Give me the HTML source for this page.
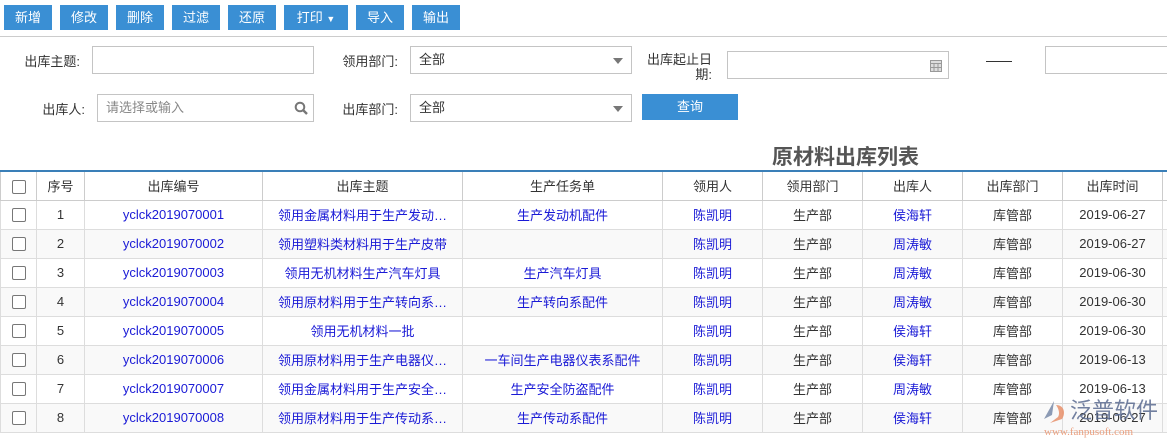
<!DOCTYPE html>
<html><head><meta charset="utf-8"><style>
*{box-sizing:border-box;margin:0;padding:0}
body{width:1167px;height:442px;overflow:hidden;background:#fff;font-family:"Liberation Sans","Noto Sans CJK SC",sans-serif;font-size:13px;color:#333;position:relative}
.btn{position:absolute;top:5px;height:25px;background:#3a8fd4;color:#fff;text-align:center;line-height:25px;font-size:13px}
.hr{position:absolute;top:36px;left:0;width:1167px;height:1px;background:#ccc}
.lbl{position:absolute;font-size:13px;color:#333;text-align:right}
.inp{position:absolute;border:1px solid #c4c4c4;height:28px;background:#fff;font-size:13px;line-height:26px;padding-left:8px}
.tri{position:absolute;right:8px;top:11px;width:0;height:0;border-left:5px solid transparent;border-right:5px solid transparent;border-top:6px solid #777}
table{position:absolute;left:0;top:170px;border-collapse:collapse;border-top:2px solid #3a7fb8;table-layout:fixed;width:1167px}
td,th{height:29px;border:1px solid #ddd;text-align:center;font-weight:normal;font-size:13px;white-space:nowrap;overflow:hidden}
th{border-color:#ccc;border-bottom:1px solid #ccc}
tr:nth-child(odd) td{background:#f9f9f9}
.a{color:#1a1ad6}
.cb{display:inline-block;width:14px;height:14px;border:1px solid #777;border-radius:2px;vertical-align:middle;background:#fff}
</style></head><body>
<div class="btn" style="left:4px;width:48px">新增</div>
<div class="btn" style="left:60px;width:48px">修改</div>
<div class="btn" style="left:116px;width:48px">删除</div>
<div class="btn" style="left:172px;width:48px">过滤</div>
<div class="btn" style="left:228px;width:48px">还原</div>
<div class="btn" style="left:284px;width:64px">打印 <span style="font-size:9px">▼</span></div>
<div class="btn" style="left:356px;width:48px">导入</div>
<div class="btn" style="left:412px;width:48px">输出</div>
<div class="hr"></div>

<div class="lbl" style="left:10px;top:51px;width:70px">出库主题:</div>
<div class="inp" style="left:92px;top:46px;width:222px"></div>
<div class="lbl" style="left:320px;top:51px;width:78px">领用部门:</div>
<div class="inp" style="left:410px;top:46px;width:222px">全部<div class="tri"></div></div>
<div class="lbl" style="left:640px;top:52px;width:72px;line-height:15px">出库起止日<br>期:</div>
<div class="inp" style="left:727px;top:51px;width:222px"><svg style="position:absolute;right:6px;top:7px" width="12" height="13" viewBox="0 0 12 13"><rect x="0.5" y="1.5" width="11" height="11" fill="#ddd" stroke="#999"/><path d="M0 4.5h12M4 4v9M8 4v9M0 8.5h12" stroke="#999"/></svg></div>
<div style="position:absolute;left:986px;top:61px;width:26px;height:1px;background:#333"></div>
<div class="inp" style="left:1045px;top:46px;width:130px"></div>

<div class="lbl" style="left:10px;top:99px;width:75px">出库人:</div>
<div class="inp" style="left:97px;top:94px;width:217px;color:#888">请选择或输入<svg style="position:absolute;right:5px;top:6px" width="14" height="14" viewBox="0 0 14 14"><circle cx="6" cy="6" r="4.3" fill="none" stroke="#777" stroke-width="2"/><path d="M9 9l4 4" stroke="#777" stroke-width="2.4"/></svg></div>
<div class="lbl" style="left:320px;top:99px;width:78px">出库部门:</div>
<div class="inp" style="left:410px;top:94px;width:222px">全部<div class="tri"></div></div>
<div class="btn" style="left:642px;top:94px;width:96px;height:26px;line-height:26px">查询</div>

<div style="position:absolute;left:772px;top:141px;font-size:21px;font-weight:bold;color:#555">原材料出库列表</div>

<table>
<colgroup><col style="width:36px"><col style="width:48px"><col style="width:178px"><col style="width:200px"><col style="width:200px"><col style="width:100px"><col style="width:100px"><col style="width:100px"><col style="width:100px"><col style="width:100px"><col style="width:5px"></colgroup>
<tr style="background:#fff"><th><span class="cb"></span></th><th>序号</th><th>出库编号</th><th>出库主题</th><th>生产任务单</th><th>领用人</th><th>领用部门</th><th>出库人</th><th>出库部门</th><th>出库时间</th><th></th></tr>
<tr><td><span class="cb"></span></td><td>1</td><td class="a">yclck2019070001</td><td class="a">领用金属材料用于生产发动…</td><td class="a">生产发动机配件</td><td class="a">陈凯明</td><td>生产部</td><td class="a">侯海轩</td><td>库管部</td><td>2019-06-27</td><td></td></tr>
<tr><td><span class="cb"></span></td><td>2</td><td class="a">yclck2019070002</td><td class="a">领用塑料类材料用于生产皮带</td><td></td><td class="a">陈凯明</td><td>生产部</td><td class="a">周涛敏</td><td>库管部</td><td>2019-06-27</td><td></td></tr>
<tr><td><span class="cb"></span></td><td>3</td><td class="a">yclck2019070003</td><td class="a">领用无机材料生产汽车灯具</td><td class="a">生产汽车灯具</td><td class="a">陈凯明</td><td>生产部</td><td class="a">周涛敏</td><td>库管部</td><td>2019-06-30</td><td></td></tr>
<tr><td><span class="cb"></span></td><td>4</td><td class="a">yclck2019070004</td><td class="a">领用原材料用于生产转向系…</td><td class="a">生产转向系配件</td><td class="a">陈凯明</td><td>生产部</td><td class="a">周涛敏</td><td>库管部</td><td>2019-06-30</td><td></td></tr>
<tr><td><span class="cb"></span></td><td>5</td><td class="a">yclck2019070005</td><td class="a">领用无机材料一批</td><td></td><td class="a">陈凯明</td><td>生产部</td><td class="a">侯海轩</td><td>库管部</td><td>2019-06-30</td><td></td></tr>
<tr><td><span class="cb"></span></td><td>6</td><td class="a">yclck2019070006</td><td class="a">领用原材料用于生产电器仪…</td><td class="a">一车间生产电器仪表系配件</td><td class="a">陈凯明</td><td>生产部</td><td class="a">侯海轩</td><td>库管部</td><td>2019-06-13</td><td></td></tr>
<tr><td><span class="cb"></span></td><td>7</td><td class="a">yclck2019070007</td><td class="a">领用金属材料用于生产安全…</td><td class="a">生产安全防盗配件</td><td class="a">陈凯明</td><td>生产部</td><td class="a">周涛敏</td><td>库管部</td><td>2019-06-13</td><td></td></tr>
<tr><td><span class="cb"></span></td><td>8</td><td class="a">yclck2019070008</td><td class="a">领用原材料用于生产传动系…</td><td class="a">生产传动系配件</td><td class="a">陈凯明</td><td>生产部</td><td class="a">侯海轩</td><td>库管部</td><td>2019-06-27</td><td></td></tr>
</table>
<div style="position:absolute;left:1040px;top:397px;width:127px;height:45px;opacity:.85;white-space:nowrap">
<svg style="position:absolute;left:0;top:2px" width="28" height="28" viewBox="0 0 28 28"><path d="M14 2L4 20l8-4z" fill="#7a8aa8"/><path d="M16 6c8 0 10 8 6 14l-12 4 8-6c2-3 1-8-2-12z" fill="#e8906a"/></svg>
<div style="position:absolute;left:30px;top:0;font-size:22px;line-height:28px;color:#5a6a90">泛普软件</div>
<div style="position:absolute;left:4px;top:29px;font-size:11px;color:#e8906a;font-family:'Liberation Serif',serif">www.fanpusoft.com</div>
</div>
</body></html>
